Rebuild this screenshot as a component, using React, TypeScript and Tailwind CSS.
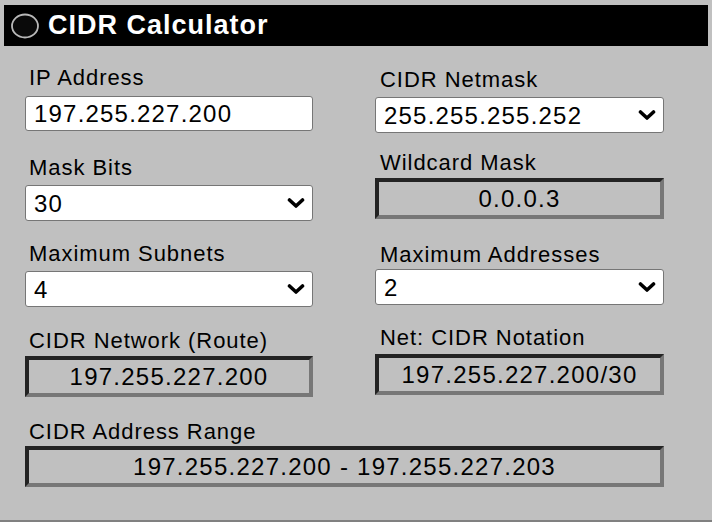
import React from "react";

// ** small pieces
const Label = ({ text, className = "" }: { text: string; className?: string }) => (
  <div className={`h-[26px] text-[22px] leading-[26px] tracking-[0.95px] text-black ${className}`}>
    {text}
  </div>
);

const Chevron = () => (
  <svg width="18" height="11" viewBox="0 0 18 11" className="pointer-events-none absolute right-[8px] top-1/2 -translate-y-1/2">
    <path d="M2.5 2.5 L9 8.5 L15.5 2.5" fill="none" stroke="#000" strokeWidth="3.6" strokeLinecap="round" strokeLinejoin="round" />
  </svg>
);

const SelectBox = ({ value, options, className = "" }: { value: string; options: string[]; className?: string }) => (
  <div className={`relative h-[36px] ${className}`}>
    <select
      defaultValue={value}
      className="h-full w-full appearance-none rounded-[3px] border border-[#767676] bg-white pl-[8px] text-[24px] tracking-[1.2px] text-black outline-none"
    >
      {options.map((o) => (
        <option key={o} value={o}>
          {o}
        </option>
      ))}
    </select>
    <Chevron />
  </div>
);

const ReadBox = ({ value, className = "" }: { value: string; className?: string }) => (
  <div
    className={`flex h-[41px] items-center justify-center border-4 border-t-[#232323] border-l-[#232323] border-b-[#777777] border-r-[#777777] bg-[#c0c0c0] text-[24px] tracking-[1.25px] text-black ${className}`}
  >
    {value}
  </div>
);

const App = () => {
  return (
    <div className="h-[522px] w-[712px] overflow-hidden border-b-2 border-[#808080] bg-[#c0c0c0] px-[4px] pt-[5px] font-['Liberation_Sans',Arial,sans-serif]">
      {/* header */}
      <div className="flex h-[41px] items-center bg-black pl-[6px]">
        <svg width="30" height="26" viewBox="0 0 30 26">
          <ellipse cx="15" cy="13" rx="13" ry="11.5" fill="#0a0a0a" stroke="#b8b8b8" strokeWidth="1.8" />
        </svg>
        <span className="ml-[8px] text-[27px] font-bold leading-none tracking-[1px] text-white">CIDR Calculator</span>
      </div>

      <div className="px-[21px]">
        <div className="flex gap-[62px]">
          {/* left column */}
          <div className="flex w-[288px] flex-col">
            <Label text="IP Address" className="mt-[19px] pl-[4px]" />
            <input
              defaultValue="197.255.227.200"
              className="mt-[5px] h-[35px] w-full rounded-[3px] border border-[#767676] bg-white pl-[8px] text-[24px] tracking-[1.2px] text-black outline-none"
            />
            <Label text="Mask Bits" className="mt-[24px] pl-[4px]" />
            <SelectBox value="30" options={["28", "29", "30", "31", "32"]} className="mt-[4px]" />
            <Label text="Maximum Subnets" className="mt-[20px] pl-[4px]" />
            <SelectBox value="4" options={["1", "2", "4", "8"]} className="mt-[4px]" />
            <Label text="CIDR Network (Route)" className="mt-[21px] pl-[4px]" />
            <ReadBox value="197.255.227.200" className="mt-[2px]" />
          </div>

          {/* right column */}
          <div className="flex w-[289px] flex-col">
            <Label text="CIDR Netmask" className="mt-[21px] pl-[5px]" />
            <SelectBox
              value="255.255.255.252"
              options={["255.255.255.240", "255.255.255.248", "255.255.255.252", "255.255.255.254"]}
              className="mt-[4px]"
            />
            <Label text="Wildcard Mask" className="mt-[17px] pl-[5px]" />
            <ReadBox value="0.0.0.3" className="mt-[2px]" />
            <Label text="Maximum Addresses" className="mt-[23px] pl-[5px]" />
            <SelectBox value="2" options={["1", "2", "6", "14"]} className="mt-[1px]" />
            <Label text="Net: CIDR Notation" className="mt-[20px] pl-[5px]" />
            <ReadBox value="197.255.227.200/30" className="mt-[3px]" />
          </div>
        </div>

        {/* range */}
        <Label text="CIDR Address Range" className="mt-[22px] pl-[4px]" />
        <ReadBox value="197.255.227.200 - 197.255.227.203" className="mt-[1px] w-[639px]" />
      </div>
    </div>
  );
};

export default App;
